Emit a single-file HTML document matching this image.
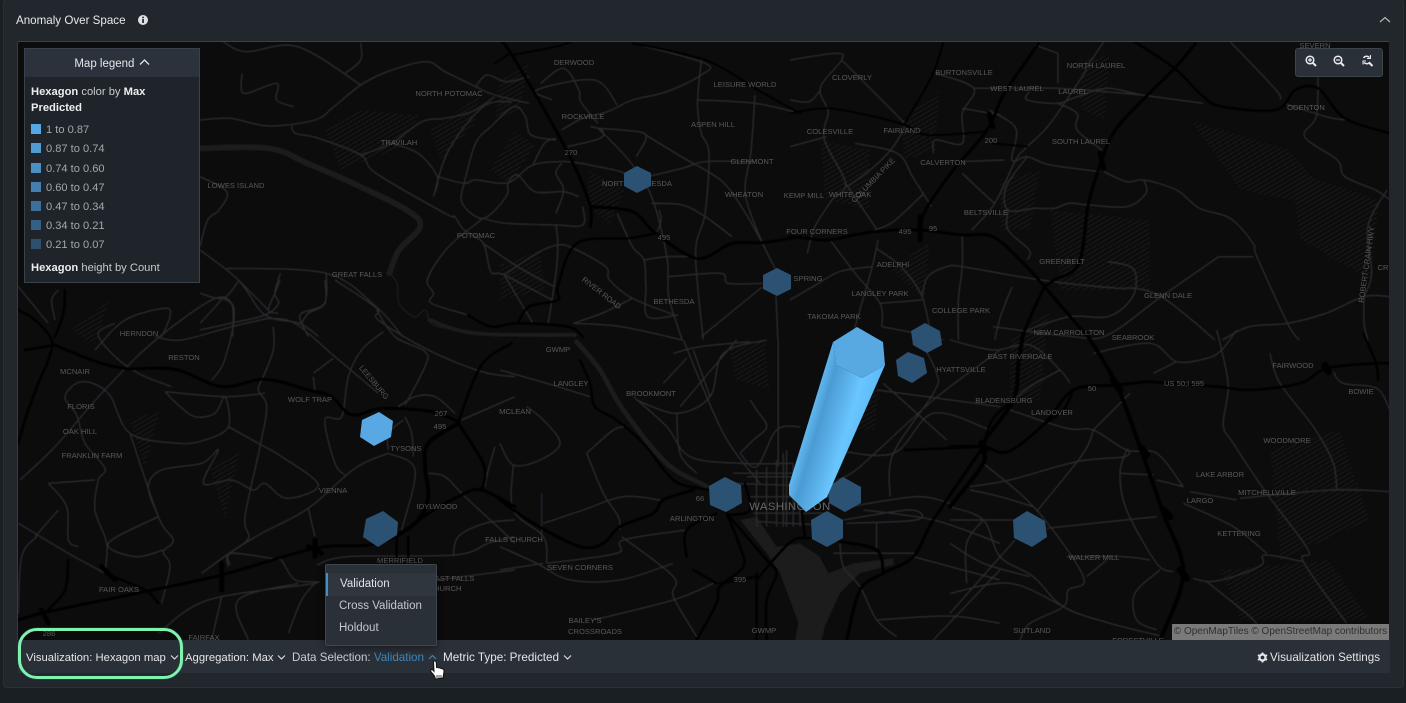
<!DOCTYPE html>
<html><head><meta charset="utf-8"><title>Anomaly Over Space</title>
<style>
html,body{margin:0;padding:0;width:1406px;height:703px;overflow:hidden;background:#1a1f24;font-family:"Liberation Sans",sans-serif;color:#e4e6e8}
#panel{position:absolute;left:3px;top:-1px;width:1399px;height:687px;background:#21272c;border:1px solid #2a3036;border-radius:4px}
#map{position:absolute;left:0;top:0}
.r path,.h path,.w path{vector-effect:non-scaling-stroke;fill:none}
.r path{stroke:#2c2c2e;stroke-width:1.4;stroke-linejoin:round}
.h path{stroke:#000;stroke-width:3;stroke-linejoin:round;stroke-linecap:round}
.w{stroke:#1a1a1c;stroke-linejoin:round;stroke-linecap:round}
.l text{font-size:7.6px;fill:#585858;text-anchor:middle;font-family:"Liberation Sans",sans-serif}
.t{position:absolute;white-space:nowrap;font-size:12px;line-height:14px}
#tb{position:absolute;left:18px;top:640px;width:1372px;height:33px;background:#2a3037}
#lg{position:absolute;left:24px;top:48px;width:174px;height:233px;background:#1e2429;border:1px solid #39414a}
#lgh{height:28px;background:#2c323c;text-align:center;font-size:11.5px;line-height:30px;color:#e4e6e8}
.s{position:absolute;left:6px;width:10px;height:10px}
.i{position:absolute;left:21px;font-size:11.1px;line-height:14px;color:#a3a8ac;white-space:nowrap}
.b{position:absolute;left:6px;font-size:11.2px;line-height:16px;color:#c8cbce;white-space:nowrap}
.b b{color:#eceef0;font-weight:bold}
#dd{position:absolute;left:325px;top:564px;width:110px;height:80px;background:#2a3037;border:1px solid #3e464e;border-radius:2px;box-shadow:0 2px 8px rgba(0,0,0,.45)}
#hl{position:absolute;left:0;top:8px;width:110px;height:23px;background:#30363e;border-left:2px solid #3f8fc9;box-sizing:border-box}
#zc{position:absolute;left:1295px;top:48px;width:86px;height:27px;background:#2a3038;border:1px solid #3c444c;border-radius:3px}
#att{position:absolute;left:1172px;top:624px;width:217px;height:16px;background:#7a7a7a;color:#303030;font-size:10px;line-height:16px;text-align:center;white-space:nowrap}
#gl{position:absolute;left:18px;top:628px;width:165px;height:51px;box-sizing:border-box;border:3px solid #7df3ab;border-radius:19px;box-shadow:0 0 1px #4ea3d8}
</style></head><body>
<div id="panel"></div>
<div class="t" style="left:16px;top:14px;font-size:11.6px;color:#e8eaec">Anomaly Over Space</div>
<svg style="position:absolute;left:137px;top:14px" width="12" height="12"><circle cx="6" cy="6" r="5" fill="#dfe1e3"/><rect x="5.2" y="5" width="1.7" height="4" fill="#21272c"/><rect x="5.2" y="2.7" width="1.7" height="1.5" fill="#21272c"/></svg>
<svg style="position:absolute;left:1379px;top:15px" width="12" height="10"><path d="M1 7L6 2.5L11 7" fill="none" stroke="#b5b9bc" stroke-width="1.2"/></svg>

<svg id="map" width="1406" height="703" viewBox="0 0 1406 703">
<defs>
<clipPath id="mc"><rect x="18" y="42" width="1371" height="598"/></clipPath>
<pattern id="ht" width="4" height="4" patternUnits="userSpaceOnUse" patternTransform="rotate(60)"><rect width="1.4" height="4" fill="#171718"/></pattern>
<filter id="bl" filterUnits="userSpaceOnUse" x="0" y="30" width="1406" height="620"><feGaussianBlur stdDeviation="0.4"/></filter>
<filter id="bt" filterUnits="userSpaceOnUse" x="0" y="30" width="1406" height="620"><feGaussianBlur stdDeviation="0.25"/></filter>
<linearGradient id="col" gradientUnits="userSpaceOnUse" x1="833" y1="342" x2="887" y2="358">
<stop offset="0" stop-color="#5fb5ee"/><stop offset=".17" stop-color="#4b9bd3"/><stop offset=".4" stop-color="#58ade6"/><stop offset=".68" stop-color="#6ac6ff"/><stop offset="1" stop-color="#5dbaf6"/>
</linearGradient>
</defs>
<rect x="18" y="42" width="1371" height="598" fill="#0c0c0d"/>
<line x1="18" y1="41.5" x2="1389" y2="41.5" stroke="#3a424a"/>
<line x1="17.5" y1="42" x2="17.5" y2="640" stroke="#333a41"/>
<g clip-path="url(#mc)">
<g filter="url(#bl)">
<!-- park hatching -->
<g fill="url(#ht)">
<path d="M325,130L360,110L420,115L395,150L340,170Z"/><path d="M430,130L480,95L475,125L440,160Z"/><path d="M500,80L530,60L520,110L495,120Z"/>
<path d="M515,130L535,145L510,185L490,170Z"/><path d="M590,170L625,190L610,225L585,205Z"/><path d="M500,265L540,250L545,290L500,300Z"/>
<path d="M730,350L765,340L770,390L735,380Z"/><path d="M840,400L880,385L875,430L850,430Z"/><path d="M1190,120L1290,150L1340,210L1240,190Z"/><path d="M1290,170L1380,200L1370,280L1300,240Z"/>
<path d="M1050,210L1150,220L1150,290L1060,290Z"/><path d="M1000,180L1040,170L1030,230L1000,230Z"/><path d="M1010,340L1050,310L1040,400L1010,400Z"/>
<path d="M1270,450L1340,430L1370,520L1280,560Z"/><path d="M1220,570L1330,560L1370,620L1240,620Z"/><path d="M1080,60L1110,55L1105,120L1080,110Z"/>
<path d="M70,330L110,300L95,345Z"/><path d="M130,420L160,410L145,470Z"/><path d="M210,470L240,450L225,520Z"/><path d="M900,120L940,90L935,150L905,160Z"/><path d="M820,140L870,150L870,210L825,200Z"/><path d="M890,270L930,240L925,300Z"/>
</g>
<!-- rivers -->
<polygon transform="translate(500,340) scale(.3333,.3333)" fill="#1a1a1c" points="720,540 770,530 830,620 900,610 960,650 985,700 1010,690 1060,670 1180,655 1180,675 1080,700 1020,760 975,860 965,900 885,900 895,850 840,700 800,640"/>
<g class="w">
<g transform="translate(200,40) scale(.3827,.3333)">
<path style="stroke-width:6" d="M0,325L180,325L280,370L400,430L540,510L575,560L520,630L495,700"/>
<path style="stroke-width:1.5" d="M495,700L515,730L520,790L560,830L590,810L610,855L720,880"/>
<path style="stroke-width:4" d="M600,840L720,880L980,885"/>
</g>
<g transform="translate(500,340) scale(.3333,.3333)">
<path style="stroke-width:5" d="M230,5L300,90L370,210L500,370L620,440L700,500"/>
</g>
</g>
<!-- minor roads -->
<g class="r">
<g transform="translate(200,40) scale(.3827,.3333)">
<path d="M60,5L120,35L255,20L420,135M380,100L420,60L420,10"/>
<path d="M0,240L80,235L180,258L300,240L350,200L420,135L490,95L590,65L640,95L720,140L770,165L860,190"/>
<path d="M240,258L250,280L310,295L420,345L460,400L640,520L665,530L690,570L740,610L760,695L795,705L920,780"/>
<path d="M420,345L500,310L580,245L640,235L710,215L770,170"/>
<path d="M860,110L800,125L750,105L720,140"/>
<path d="M690,430L720,310L760,260L820,200L850,230L865,285L930,300"/>
<path d="M610,470L650,330L740,200L815,185M610,470L620,410L570,340L500,310"/>
<path d="M620,410L690,430L720,420L805,428L870,375L960,365L1040,380L1100,395L1140,415L1260,385L1320,365L1450,365"/>
<path d="M690,430L685,490L740,535L800,470L805,430L830,405L875,455L950,455L990,470"/>
<path d="M740,535L650,620L595,715L610,760L605,790L700,825"/>
<path d="M740,535L800,550L930,555L1000,555L1000,500M930,555L935,610L930,700L910,850"/>
<path d="M945,370L930,400L950,450L930,520M870,375L900,310L930,295"/>
<path d="M740,610L830,680L925,740M795,705L880,640L935,615L975,625L1060,680L1070,720L1130,775L1240,825M795,705L870,850"/>
<path d="M975,850L1050,820L1130,775"/>
<path d="M1020,260L1050,270L1045,295L960,320M945,270L1000,235L1065,215L1130,180L1220,155L1310,105L1320,70L1130,10"/>
<path d="M1040,265L1120,360L1180,470L1220,650L1225,770L1260,900M1165,285L1250,345L1360,420L1420,510L1470,610"/>
<path d="M1310,60L1300,190L1310,280L1330,340L1320,520L1295,640L1315,900"/>
<path d="M1180,490L1260,495L1320,530L1390,590M1450,165L1440,330L1425,430L1430,490L1470,610L1505,690"/>
<path d="M1300,180L1450,190L1568,220M1090,520L1130,620L1160,660L1165,740L1170,830L1250,825"/>
<path d="M1160,660L1220,650L1300,650M1225,710L1360,700L1380,730L1470,730"/>
<path d="M1040,265L1100,270L1165,285L1140,350M0,630L100,720L170,825L260,850L310,890M70,685L330,700L460,800L530,890"/>
<path d="M330,700L325,790L265,820L265,850M210,700L195,760L205,790L170,825L80,850L0,870M100,725L60,775L0,760M60,775L85,800L85,890M60,775L0,850"/>
<path d="M1505,770L1510,900M1310,890L1470,740M0,410L70,455L50,510L20,540L0,620M980,850L1100,860L1260,900"/>
<path d="M920,180L880,150L1030,120L1090,195M890,130L950,85L990,150L995,185L1040,250M110,100L115,160L200,130L200,180L245,200M1200,510L1205,540L1195,575"/>
</g>
<g transform="translate(790,40) scale(.3827,.3333)">
<path d="M0,60L120,40L135,60L80,140L95,200L100,220L90,300L145,430L110,480L65,560L45,640"/>
<path d="M0,180L50,185L80,150M0,320L95,290M135,60L240,180L300,250M145,430L225,565"/>
<path d="M150,440L220,380L270,320L300,260M170,310L280,340L320,410L350,465L370,500M350,460L270,545L220,570"/>
<path d="M380,100L480,145L450,220L450,310L380,300L375,340M450,205L550,225M480,145L700,145L920,165"/>
<path d="M625,155L620,180L700,190L750,170L830,145L920,165L1080,190M700,190L750,220L750,270L815,330"/>
<path d="M775,90L680,250L620,320L590,360L535,490L475,570M520,210L590,265L580,360L620,350L680,375L810,395"/>
<path d="M820,395L880,425L925,420L1010,450L1070,505L1150,535L1210,610L1220,650L1300,850L1330,900"/>
<path d="M925,420L930,460L880,500L780,495L730,490L690,505L640,505L570,510L565,440L620,350"/>
<path d="M440,365L560,360M450,400L510,465L535,490M570,510L570,570L625,630L620,660M450,585L450,680L440,780L440,900"/>
<path d="M230,600L215,680L190,780L160,900M105,600L170,700L235,790L240,860M225,625L290,680L345,770L370,900"/>
<path d="M345,770L360,710L410,680L450,680L600,710L720,730L860,745L905,745L970,770L1050,840L1110,900"/>
<path d="M0,780L60,740L130,695L215,680M345,780L235,790"/>
<path d="M1568,770L1500,770L1400,820L1300,850L1200,860L1130,900M1120,650L1210,650M1120,650L970,770L830,885L740,890L530,860"/>
<path d="M830,665L890,680L905,720L890,780L830,830L730,830L620,870"/>
<path d="M1380,110L1375,230L1345,290L1430,360L1450,410L1530,450L1568,480M1290,190L1400,230L1450,240M1500,770L1520,700L1510,560L1560,450"/>
<path d="M1150,5L1270,150L1280,180M700,40L700,130M640,15L700,40M820,5L770,90M580,740L550,830L535,900M1500,770L1500,850L1510,900M240,860L330,880L400,900"/>
</g>
<g transform="translate(15,280) scale(.3333,.3333)">
<path d="M15,600L120,500L260,340L410,190L590,60L650,70L655,135L625,250L590,300"/>
<path d="M760,115L840,130L960,230L1090,340M790,100L760,90L780,40L795,0M670,0L760,90M860,130L880,100L930,70L930,0M860,130L880,170"/>
<path d="M960,0L1085,85L1090,120L1240,210L1400,275L1500,290M1085,90L1140,170L1230,215L1230,260L1170,375"/>
<path d="M895,280L955,235M895,290L900,330M1105,155L1040,210L1000,290L980,410L930,420L960,550L990,585"/>
<path d="M775,140L775,210L745,290L730,330L755,380L735,500L690,710L700,775L640,825L640,860"/>
<path d="M450,335L490,375L540,410L600,400L630,350L640,440L570,480L490,490L345,460L280,340L200,305L150,350L185,405L210,490L270,565L250,600L240,690L275,790L270,880"/>
<path d="M345,460L430,710L475,780L445,815L465,860L440,970"/>
<path d="M640,440L730,490L800,530L910,615L815,655L750,610L715,630L650,600L565,610L610,510L560,550L440,570L400,620L430,710"/>
<path d="M1120,520L1020,565L880,685L740,760L650,815L560,880M880,685L900,770"/>
<path d="M430,710L280,790L360,830L445,810M10,730L160,820L270,880M65,770L20,830L10,1000M100,610L155,680L160,780L190,800M240,600L100,610M60,770L130,690"/>
<path d="M800,840L840,900L900,910L580,960L430,1060M800,840L650,820L645,855M900,910L860,960L820,1060M700,1080L670,960L850,910M590,1080L620,950"/>
<path d="M905,855L1000,830L1320,825L1420,790L1500,770M1265,900L1500,870"/>
<path d="M1120,520L1200,570L1160,750M1170,410L1190,460L1195,530M1120,510L1120,460L1165,420"/>
<path d="M1240,580L1290,590L1350,650L1480,770L1500,790M1410,620L1420,570L1440,500M1150,380L1200,350L1260,350L1320,400M1340,420L1500,350"/>
<path d="M1315,830L1330,770L1410,730L1500,720M450,335L630,350L750,340M10,20L100,130M300,130L250,160L290,220L370,280L470,320M420,170L500,180L650,140L760,115"/>
<path d="M130,30L110,60L120,120M240,210L330,120L450,85L465,110L440,170"/>
</g>
<g transform="translate(500,340) scale(.3333,.3333)">
<path d="M0,90L140,130L270,170M550,0L670,280L780,430M710,0L540,200"/>
<path d="M40,375L40,510L130,590L140,670M0,310L40,375L120,360L180,310L130,240L80,200"/>
<path d="M260,340L340,270L380,260M260,340L310,460L355,530L360,570M130,550L250,510L370,470L480,480M125,460L125,590"/>
<path d="M0,620L110,670L210,720L360,720L520,670M140,670L350,640L370,600L560,570M365,590L520,710L520,770L590,890M0,690L130,670M280,840L520,780L640,730"/>
<path d="M530,220L540,340L590,400M410,180L530,220L630,170L670,40L800,0M400,170L500,260L570,350L720,370L880,370M630,170L580,30M835,0L835,380M520,40L600,20L750,5M490,130L560,55"/>
<path d="M770,390L770,560M800,380L800,560M830,360L830,560M850,340L850,560M860,330L860,560M880,370L880,560M900,370L900,560M740,410L1000,410M700,400L1000,400M690,430L1000,440M750,470L1000,470M760,520L980,520M775,545L960,555"/>
<path d="M1030,540L1230,510L1250,540L1040,550M1000,330L1180,340L1300,220L1470,270M1150,130L1340,300M1130,150L1500,200M1010,420L1080,380L1300,180L1500,30M1260,0L1310,100L1300,160L1180,340L1170,470"/>
<path d="M1050,500L1250,470L1350,490M1090,510L1300,540L1500,610M1130,550L1130,630M1000,640L1250,640M1240,650L1500,720M1130,840L1280,830L1380,830L1500,850M1300,900L1500,690"/>
<path d="M1020,610L1030,680L1080,740L1130,840L1190,890M720,340L770,380L830,270L900,260M750,180L770,210L800,260L760,300L720,340"/>
</g>
<g transform="translate(950,330) scale(.3333,.3333)">
<path d="M0,30L130,60L240,45L330,120L360,160M330,120L240,170L190,210M430,70L600,40L680,95L770,85L815,60L860,0"/>
<path d="M800,0L815,60L835,170L820,285L850,340L950,490L1075,660L1060,695L1190,880M610,130L680,95M960,70L990,160L1090,290L1150,400L1160,480"/>
<path d="M870,505L1150,480L1320,485M720,485L860,510M180,240L350,295L430,300L530,360L620,370L700,470M430,300L400,370L280,520L260,545M430,300L540,190"/>
<path d="M60,470L180,450L380,395L525,380L530,360L510,430L530,540L620,700L670,725M510,430L610,435M620,450L700,470"/>
<path d="M100,400L260,540L400,740L355,780L340,830L240,880L210,930M60,480L150,500L250,530M0,570L190,570M290,595L620,560M195,630L0,850"/>
<path d="M0,530L100,570L150,680L250,740L340,830L480,880L640,920M100,570L50,640L50,760M0,790L180,760L340,830M0,640L100,700L240,740"/>
<path d="M350,680L520,680L600,690M470,690L410,740M630,720L555,790L560,870L620,900M730,745L780,755L850,740L935,705L945,675L1060,695M700,520L850,590L950,670M770,755L900,860L930,900M1150,125L1180,160L1280,175L1320,240"/>
</g>
</g>
<!-- highways -->
<g class="h">
<g transform="translate(15,280) scale(.3333,.3333)">
<path d="M120,195L230,240L330,265L480,268L620,320L750,298L880,330L950,350L1010,405L1100,385L1250,395L1330,425"/>
<path d="M1330,425L1400,255L1490,190" style="stroke-width:2.5"/>
<path d="M10,90L60,120L110,180L100,240L70,310L30,420L10,490M150,30L145,100L120,170M30,210L120,195" style="stroke-width:2.5"/>
<path d="M10,1020L100,995L390,935L620,885L900,805L1060,795L1150,765L1240,700L1340,645L1400,630L1500,680"/>
<path d="M1330,430L1400,540L1410,590L1400,630"/>
<path d="M1330,430L1240,490L1230,560L1240,650L1210,720L1150,765" style="stroke-width:4"/>
<path d="M1180,770L1180,830M1145,770L1145,830M160,840L150,930L100,990M270,880L390,930L430,970" style="stroke-width:2.5"/>
<path d="M900,780L900,830M620,850L620,930M260,860L300,900M80,990L100,1030M880,800L920,820" style="stroke-width:5"/>
</g>
<g transform="translate(200,40) scale(.3827,.3333)">
<path d="M790,5L815,45L900,210L975,370L1020,500L1020,560"/>
<path d="M1020,500L1130,515L1190,580L1300,655L1390,610L1470,608L1568,590"/>
<path d="M1190,580L1120,595L985,610L935,740L935,780L860,800L830,850" style="stroke-width:2.5"/>
<path d="M700,825L760,860L830,850L960,860L1000,890" style="stroke-width:2.5"/>
<path d="M1130,10L1320,60L1450,145L1520,190L1568,220" style="stroke-width:2"/>
<path d="M810,40L770,70M815,45L930,20L970,5" style="stroke-width:2"/>
</g>
<g transform="translate(790,40) scale(.3827,.3333)">
<path d="M0,590L50,595L100,600L220,575L340,570L450,585L530,590L610,670L665,740"/>
<path d="M1060,10L1005,85L930,170L850,270L815,360L780,490L755,670L690,720L665,740"/>
<path d="M900,5L1005,85L1080,170L1130,200L1270,210L1320,150L1380,145L1450,235L1568,280" style="stroke-width:2.5"/>
<path d="M650,10L560,160L515,270L420,400L350,520L340,590"/>
<path d="M400,10L370,110L300,250M0,220L100,205L220,230L300,255L360,285L510,275M530,310L620,320" style="stroke-width:2"/>
<path d="M665,740L640,800L605,895M665,740L770,880"/>
<path d="M340,530L340,600M520,220L530,260M810,340L820,385" style="stroke-width:5"/>
</g>
<g transform="translate(500,340) scale(.3333,.3333)">
<path d="M240,60L270,130L285,200L350,240L430,310L520,420L600,445L640,450" style="stroke-width:2.5"/>
<path d="M0,480L100,550L240,620L310,610L360,560L460,520L490,480L580,450"/>
<path d="M680,520L720,620L730,680L660,740L650,790L590,900M560,650L560,570L650,520M680,520L800,660L830,700L800,780L800,900M770,700L770,900M660,730L770,710M580,690L650,730" style="stroke-width:2.5"/>
<path d="M1450,320L1300,540L1240,650L1150,700L1080,750L1040,900M1150,700L1130,630L1020,605" />
<path d="M930,595L880,600L820,660L770,720M905,510L915,590M735,430L750,510L690,525" style="stroke-width:2.5"/>
<path d="M1215,330L1340,325L1450,320" style="stroke-width:2.5"/>
</g>
<g transform="translate(950,330) scale(.3333,.3333)">
<path d="M220,10L205,100L190,210L100,340L100,400L0,530" style="stroke-width:4"/>
<path d="M405,5L500,165L575,365L640,550L700,730L630,930" style="stroke-width:4"/>
<path d="M590,155L500,165L370,180L285,280L175,365L100,350L0,350"/>
<path d="M590,155L800,170L900,180L1050,160L1130,115L1270,100L1320,100M1280,100L1240,10M1280,100L1285,150" style="stroke-width:2.5"/>
<path d="M370,180L340,240L285,280M190,210L130,265L100,340" style="stroke-width:2.5"/>
<path d="M490,150L510,180M575,355L590,375M640,540L660,560M690,720L710,745M95,340L105,360M1125,105L1135,125" style="stroke-width:7"/>
</g>
</g>
</g>
<!-- labels -->
<g class="l" filter="url(#bt)">
<text x="574" y="65">DERWOOD</text><text x="449" y="96">NORTH POTOMAC</text><text x="745" y="87">LEISURE WORLD</text><text x="964" y="75">BURTONSVILLE</text><text x="852" y="80">CLOVERLY</text><text x="1096" y="68">NORTH LAUREL</text><text x="1017" y="91">WEST LAUREL</text><text x="1073" y="94">LAUREL</text><text x="1306" y="110">ODENTON</text><text x="583" y="119">ROCKVILLE</text><text x="713" y="127">ASPEN HILL</text><text x="830" y="134">COLESVILLE</text><text x="902" y="133">FAIRLAND</text><text x="399" y="145">TRAVILAH</text><text x="1081" y="144">SOUTH LAUREL</text><text x="991" y="143">200</text><text x="571" y="155">270</text><text x="752" y="164">GLENMONT</text><text x="943" y="165">CALVERTON</text><text x="637" y="186">NORTH BETHESDA</text><text x="744" y="197">WHEATON</text><text x="804" y="198">KEMP MILL</text><text x="850" y="197">WHITE OAK</text><text x="236" y="188">LOWES ISLAND</text><text x="986" y="215">BELTSVILLE</text><text x="476" y="238">POTOMAC</text><text x="817" y="234">FOUR CORNERS</text><text x="664" y="240">495</text><text x="905" y="234">495</text><text x="933" y="231">95</text><text x="1062" y="264">GREENBELT</text><text x="1168" y="298">GLENN DALE</text><text x="893" y="267">ADELPHI</text><text x="808" y="281">SPRING</text><text x="357" y="277">GREAT FALLS</text><text x="674" y="304">BETHESDA</text><text x="880" y="296">LANGLEY PARK</text><text x="961" y="313">COLLEGE PARK</text><text x="834" y="319">TAKOMA PARK</text><text x="1069" y="335">NEW CARROLLTON</text><text x="1133" y="340">SEABROOK</text><text x="139" y="336">HERNDON</text><text x="184" y="360">RESTON</text><text x="1020" y="359">EAST RIVERDALE</text><text x="961" y="372">HYATTSVILLE</text><text x="1293" y="368">FAIRWOOD</text><text x="75" y="374">MCNAIR</text><text x="1361" y="394">BOWIE</text><text x="1184" y="386">US 50;I 595</text><text x="1092" y="391">50</text><text x="558" y="352">GWMP</text><text x="81" y="409">FLORIS</text><text x="80" y="434">OAK HILL</text><text x="92" y="458">FRANKLIN FARM</text><text x="310" y="402">WOLF TRAP</text><text x="441" y="416">267</text><text x="440" y="429">495</text><text x="515" y="414">MCLEAN</text><text x="571" y="386">LANGLEY</text><text x="651" y="396">BROOKMONT</text><text x="1004" y="403">BLADENSBURG</text><text x="1052" y="415">LANDOVER</text><text x="1287" y="443">WOODMORE</text><text x="406" y="451">TYSONS</text><text x="1220" y="477">LAKE ARBOR</text><text x="1267" y="495">MITCHELLVILLE</text><text x="333" y="493">VIENNA</text><text x="700" y="501">66</text><text x="437" y="509">IDYLWOOD</text><text x="1200" y="503">LARGO</text><text x="692" y="521">ARLINGTON</text><text x="514" y="542">FALLS CHURCH</text><text x="1239" y="536">KETTERING</text><text x="400" y="563">MERRIFIELD</text><text x="1094" y="560">WALKER MILL</text><text x="580" y="570">SEVEN CORNERS</text><text x="119" y="592">FAIR OAKS</text><text x="740" y="582">395</text><text x="585" y="623">BAILEY'S</text><text x="595" y="634">CROSSROADS</text><text x="764" y="633">GWMP</text><text x="1032" y="633">SUITLAND</text><text x="204" y="640">FAIRFAX</text><text x="49" y="636">286</text><text x="452" y="581">EAST FALLS</text><text x="445" y="591">CHURCH</text><text x="1383" y="270">CR</text><text x="1138" y="643">FORESTVILLE</text><text x="1315" y="48">SEVERN</text>
<text x="790" y="510" style="font-size:11.2px;letter-spacing:.5px;fill:#666">WASHINGTON</text>
<text x="0" y="0" transform="translate(875,182) rotate(-46)">COLUMBIA PIKE</text>
<text x="0" y="0" transform="translate(372,384) rotate(50)">LEESBURG</text>
<text x="0" y="0" transform="translate(600,295) rotate(38)">RIVER ROAD</text>
<text x="0" y="0" transform="translate(1369,265) rotate(-82)">ROBERT-CRAIN HWY</text>
</g>
<!-- hexes -->
<g fill="#2c5273">
<polygon points="637,166 651,173 651,186 637,193 624,186 624,173"/>
<polygon points="777,268 791,275 791,289 777,296 763,289 763,275"/>
<polygon points="925,323 940,331 942,345 927,353 913,345 911,331"/>
<polygon points="908,352 924,358 927,373 912,383 898,376 896,360"/>
<polygon points="383,511 398,522 397,535 378,547 363,537 366,519"/>
<polygon points="725,477 741,485 742,503 726,512 710,505 709,486"/>
<polygon points="843,477 861,487 861,503 845,512 829,503 828,487"/>
<polygon points="827,511 843,520 843,538 827,547 812,539 811,520"/>
<polygon points="1027,511 1045,521 1047,537 1032,547 1014,538 1013,520"/>
</g>
<polygon points="379,412 393,421 391,437 374,446 360,437 362,420" fill="#57a8e3"/>
<polygon points="833,342 789,485 789,495 806,512 827,497 885,365 862,378 836,365" fill="url(#col)"/>
<polygon points="857,327 883,342 885,365 862,378 836,365 833,342" fill="#58a9e2"/>
</g>
</svg>

<div id="att">© OpenMapTiles © OpenStreetMap contributors</div>

<div id="zc"></div>
<svg style="position:absolute;left:1295px;top:48px" width="88" height="28" fill="none" stroke="#e8eaec">
<g stroke-width="1.5"><circle cx="15" cy="12" r="3.8"/><path d="M18 15L21 18" stroke-width="2"/><path d="M13 12H17M15 10V14" stroke-width="1.2"/>
<circle cx="43" cy="12" r="3.8"/><path d="M46 15L49 18" stroke-width="2"/><path d="M41 12H45" stroke-width="1.2"/>
<path d="M68.500 10A3.800 3.800 0 0 1 74.500 9.500M75 14A3.800 3.800 0 0 1 69 14.500"/><path d="M74.500 15L77.500 18" stroke-width="2"/><path d="M75.500 7V10.500H72M68 16.500V13H71" stroke-width="1"/></g>
</svg>

<div id="lg">
<div id="lgh">Map legend <svg width="11" height="8" style="margin-left:1px;vertical-align:1px"><path d="M1 6.500L5.500 2L10 6.500" fill="none" stroke="#e4e6e8" stroke-width="1.300"/></svg></div>
<div class="b" style="top:35px"><b>Hexagon</b> color by <b>Max</b></div>
<div class="b" style="top:51px"><b>Predicted</b></div>
<div class="s" style="top:75px;background:#56a8e4"></div><div class="i" style="top:74px">1 to 0.87</div>
<div class="s" style="top:94px;background:#4f9bd2"></div><div class="i" style="top:93px">0.87 to 0.74</div>
<div class="s" style="top:114px;background:#4a90c3"></div><div class="i" style="top:113px">0.74 to 0.60</div>
<div class="s" style="top:133px;background:#4380b0"></div><div class="i" style="top:132px">0.60 to 0.47</div>
<div class="s" style="top:152px;background:#3c709a"></div><div class="i" style="top:151px">0.47 to 0.34</div>
<div class="s" style="top:171px;background:#356085"></div><div class="i" style="top:170px">0.34 to 0.21</div>
<div class="s" style="top:190px;background:#2e506d"></div><div class="i" style="top:189px">0.21 to 0.07</div>
<div class="b" style="top:211px"><b>Hexagon</b> height by Count</div>
</div>

<div id="tb"></div>
<div class="t" style="left:26px;top:651px;font-size:11.3px">Visualization: Hexagon map</div>
<div class="t" style="left:185px;top:651px;font-size:11.3px">Aggregation: Max</div>
<div class="t" style="left:292px;top:651px;font-size:11.6px;color:#c9cdd1">Data Selection: <span style="color:#3d85bd">Validation</span></div>
<div class="t" style="left:443px;top:651px;font-size:11.7px">Metric Type: Predicted</div>
<div class="t" style="left:1270px;top:651px;font-size:11.6px">Visualization Settings</div>
<svg style="position:absolute;left:0;top:640px" width="600" height="40" fill="none" stroke="#dfe2e5" stroke-width="1.100">
<path d="M171 15.500L174.500 19L178 15.500M278 15.500L281.500 19L285 15.500M564 15.500L567.500 19L571 15.500"/>
<path d="M429 19L432.500 15.500L436 19" stroke="#3d85bd"/>
</svg>
<svg style="position:absolute;left:1257px;top:652px" width="11" height="11"><circle cx="5.500" cy="5.500" r="3" fill="none" stroke="#e6e8ea" stroke-width="2.200"/><path d="M5.500 .5V2.500M5.500 8.500V10.500M1 3L2.700 4M8.300 7L10 8M1 8L2.700 7M8.300 4L10 3" stroke="#e6e8ea" stroke-width="1.800"/></svg>

<div id="dd"><div id="hl"></div>
<div class="t" style="left:14px;top:12px;font-size:11.5px;color:#dfe2e5">Validation</div>
<div class="t" style="left:13px;top:34px;font-size:11.5px;color:#c4c8cc">Cross Validation</div>
<div class="t" style="left:13px;top:56px;font-size:11.5px;color:#c4c8cc">Holdout</div>
</div>
<div id="gl"></div>
<svg style="position:absolute;left:429px;top:660px" width="18" height="21"><path d="M4.500 1.500C5.500 .5 7 1 7.200 2.200L7.600 7.500L11 8L14 9C15 9.500 15.200 10.500 15 11.500L14 18L6.500 19L5.500 16L1.800 11.500C1 10.300 2.500 9 3.800 10L5 11.300Z" fill="#fff" stroke="#111" stroke-width="1"/><path d="M8 15V18M10 15V18M12 15V18" stroke="#333" stroke-width=".9"/></svg>
<script>
document.querySelectorAll('.r path,.h path,.w path').forEach(function(p){
  var out='';
  p.getAttribute('d').split('M').filter(Boolean).forEach(function(s){
    var n=s.trim().split('L').map(function(q){return q.split(',').map(Number)});
    out+='M'+n[0][0]+','+n[0][1];
    for(var i=0;i<n.length-1;i++){
      var a=n[Math.max(i-1,0)],b=n[i],c=n[i+1],d=n[Math.min(i+2,n.length-1)];
      out+='C'+(b[0]+(c[0]-a[0])/6).toFixed(1)+','+(b[1]+(c[1]-a[1])/6).toFixed(1)+' '+(c[0]-(d[0]-b[0])/6).toFixed(1)+','+(c[1]-(d[1]-b[1])/6).toFixed(1)+' '+c[0]+','+c[1];
    }
  });
  p.setAttribute('d',out);
});
</script>
</body></html>
